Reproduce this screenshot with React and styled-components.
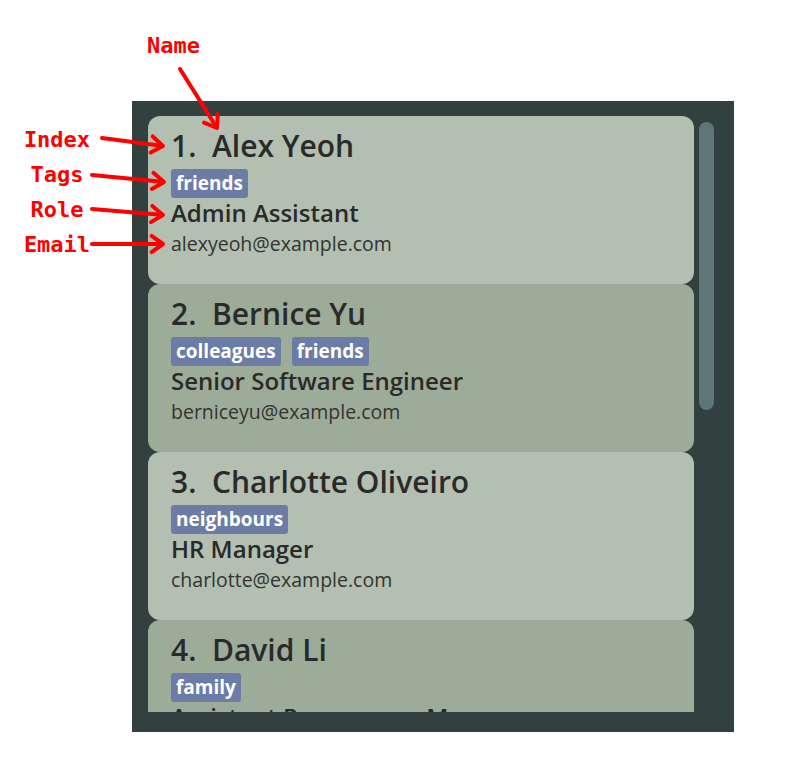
import React from 'react';
import styled, { createGlobalStyle } from 'styled-components';

const GlobalStyle = createGlobalStyle`
  html, body {
    margin: 0;
    padding: 0;
    background: #ffffff;
  }
`;

const people = [
  { name: 'Alex Yeoh', tags: ['friends'], role: 'Admin Assistant', email: 'alexyeoh@example.com' },
  { name: 'Bernice Yu', tags: ['colleagues', 'friends'], role: 'Senior Software Engineer', email: 'berniceyu@example.com' },
  { name: 'Charlotte Oliveiro', tags: ['neighbours'], role: 'HR Manager', email: 'charlotte@example.com' },
  { name: 'David Li', tags: ['family'], role: 'Assistant Programme Manager', email: 'lidavid@example.com' },
];

const Page = styled.div`
  position: relative;
  width: 794px;
  height: 768px;
  background: #ffffff;
  overflow: hidden;
  padding-top: 101px;
  box-sizing: border-box;
`;

const Panel = styled.div`
  margin-left: 132px;
  width: 602px;
  height: 631px;
  box-sizing: border-box;
  padding: 15px 0 20px 16px;
  background: #324140;
  display: flex;
  align-items: flex-start;
`;

const List = styled.div`
  width: 546px;
  height: 100%;
  overflow: hidden;
  display: flex;
  flex-direction: column;
`;

const Scrollbar = styled.div`
  margin: 6px 0 0 5px;
  width: 15px;
  height: 288px;
  border-radius: 8px;
  background: #5f7676;
`;

const Card = styled.div`
  flex: 0 0 168px;
  box-sizing: border-box;
  padding: 10px 23px 0;
  border-radius: 12px;
  background: ${(p) => (p.$odd ? '#9dac98' : '#b3bfb0')};
  font-family: 'Open Sans', 'Noto Sans', sans-serif;
  color: #2a2a2a;
  overflow: hidden;
`;

const Name = styled.div`
  font-size: 30px;
  line-height: 40px;
  font-weight: 600;
  white-space: pre;
`;

const Tags = styled.div`
  display: flex;
  gap: 11px;
  margin-top: 3px;
`;

const Tag = styled.span`
  height: 29px;
  line-height: 29px;
  padding: 0 5px;
  border-radius: 3px;
  background: #6b7ca6;
  color: #ffffff;
  font-size: 19px;
  font-weight: 700;
`;

const Role = styled.div`
  font-size: 24px;
  line-height: 30px;
  font-weight: 600;
  white-space: nowrap;
`;

const Email = styled.div`
  margin-top: 3px;
  font-size: 19.5px;
  line-height: 26px;
  color: #333333;
`;

const Callout = styled.span`
  font-family: 'DejaVu Sans Mono', 'Liberation Mono', monospace;
  font-weight: 700;
  font-size: 22px;
  color: #ff0000;
`;

const NameCallout = styled(Callout)`
  position: absolute;
  left: 147px;
  top: 31px;
  line-height: 30px;
`;

const SideCallouts = styled.div`
  position: absolute;
  left: 14px;
  top: 122px;
  width: 86px;
  display: flex;
  flex-direction: column;
  align-items: center;
  line-height: 35px;
`;

const Arrows = styled.svg`
  position: absolute;
  left: 0;
  top: 0;
  pointer-events: none;
`;

const arrows = [
  { from: [180, 69], to: [217, 128] },
  { from: [102, 138], to: [163, 146] },
  { from: [92, 175], to: [164, 182] },
  { from: [92, 209], to: [163, 215] },
  { from: [92, 244], to: [163, 244] },
];

function Arrow({ from, to }) {
  const [x1, y1] = from;
  const [x2, y2] = to;
  const a = Math.atan2(y2 - y1, x2 - x1);
  const len = 14;
  const spread = 0.62;
  const h1 = [x2 - len * Math.cos(a - spread), y2 - len * Math.sin(a - spread)];
  const h2 = [x2 - len * Math.cos(a + spread), y2 - len * Math.sin(a + spread)];
  return (
    <g>
      <line x1={x1} y1={y1} x2={x2 - 2 * Math.cos(a)} y2={y2 - 2 * Math.sin(a)} />
      <polyline points={`${h1.join(',')} ${x2},${y2} ${h2.join(',')}`} />
    </g>
  );
}

export default function App() {
  return (
    <>
      <GlobalStyle />
      <Page>
        <Panel>
          <List>
            {people.map((p, i) => (
              <Card key={p.name} $odd={i % 2 === 1}>
                <Name>{`${i + 1}.  ${p.name}`}</Name>
                <Tags>
                  {p.tags.map((t) => (
                    <Tag key={t}>{t}</Tag>
                  ))}
                </Tags>
                <Role>{p.role}</Role>
                <Email>{p.email}</Email>
              </Card>
            ))}
          </List>
          <Scrollbar />
        </Panel>

        <NameCallout>Name</NameCallout>
        <SideCallouts>
          <Callout>Index</Callout>
          <Callout>Tags</Callout>
          <Callout>Role</Callout>
          <Callout>Email</Callout>
        </SideCallouts>
        <Arrows width="794" height="768" viewBox="0 0 794 768">
          <g stroke="#ff0000" strokeWidth="4" strokeLinecap="round" strokeLinejoin="round" fill="none">
            {arrows.map((a, i) => (
              <Arrow key={i} {...a} />
            ))}
          </g>
        </Arrows>
      </Page>
    </>
  );
}
